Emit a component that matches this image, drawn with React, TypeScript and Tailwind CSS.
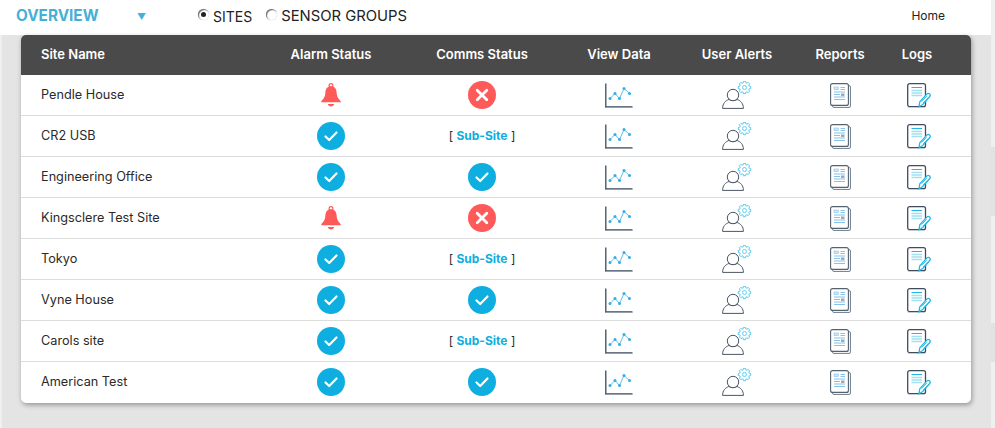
type Site = { name: string; alarm: boolean; comms: "ok" | "bad" | "sub" };

const sites: Site[] = [
    { name: "Pendle House", alarm: true, comms: "bad" },
    { name: "CR2 USB", alarm: false, comms: "sub" },
    { name: "Engineering Office", alarm: false, comms: "ok" },
    { name: "Kingsclere Test Site", alarm: true, comms: "bad" },
    { name: "Tokyo", alarm: false, comms: "sub" },
    { name: "Vyne House", alarm: false, comms: "ok" },
    { name: "Carols site", alarm: false, comms: "sub" },
    { name: "American Test", alarm: false, comms: "ok" },
];

const cols = "grid grid-cols-[234px_152px_150px_124px_112px_94px_60px_24px] items-center";

// 8-tooth cog outline
const gearPath = (cx: number, cy: number, outer: number, inner: number) => {
    const pts: string[] = [];
    for (let i = 0; i < 8; i++) {
        const a = (i * Math.PI) / 4;
        [[-0.27, inner], [-0.17, outer], [0.17, outer], [0.27, inner]].forEach(([d, r]) => {
            pts.push(`${(cx + r * Math.cos(a + d)).toFixed(2)} ${(cy + r * Math.sin(a + d)).toFixed(2)}`);
        });
    }
    return `M${pts.join("L")}Z`;
};

function Bell() {
    return (
        <svg width="22" height="25" viewBox="0 0 22 25">
            <circle cx="11" cy="2.600" r="1.900" fill="none" stroke="#ff5a5a" strokeWidth="1.200" />
            <path d="M11 3.200c-3.600 0-5.400 2.600-5.600 6-.2 3.400-1 6-3.600 8.400-.5.600-.7 1.200-.7 1.700h19.800c0-.5-.2-1.100-.7-1.700-2.600-2.400-3.400-5-3.600-8.400-.2-3.400-2-6-5.600-6z" fill="#ff5a5a" />
            <path d="M7.800 21h6.400c-.3 1.500-1.600 2.400-3.200 2.400S8.100 22.500 7.800 21z" fill="#ff5a5a" />
        </svg>
    );
}

function Check() {
    return (
        <svg width="28" height="28" viewBox="0 0 28 28">
            <circle cx="14" cy="14" r="14" fill="#0eaee0" />
            <path d="M8.500 14.500l3.700 3.500 7.300-7.500" fill="none" stroke="#fff" strokeWidth="2.200" strokeLinecap="round" strokeLinejoin="round" />
        </svg>
    );
}

function Cross() {
    return (
        <svg width="28" height="28" viewBox="0 0 28 28">
            <circle cx="14" cy="14" r="14" fill="#ff5a5a" />
            <path d="M9.200 9.200l9.600 9.600M18.800 9.200l-9.600 9.600" fill="none" stroke="#fff" strokeWidth="2.800" strokeLinecap="round" />
        </svg>
    );
}

function ChartIcon() {
    return (
        <svg width="28" height="25" viewBox="0 0 28 25">
            <path d="M0.800 0.500V24H27.500" fill="none" stroke="#3b4a5c" strokeWidth="1.300" />
            <path d="M0.800 24.900H27.500" stroke="#c5cad0" strokeWidth="0.800" />
            <path d="M5 15.500L10 10.500L14.500 15.500L19 5.500L24.500 10.500" fill="none" stroke="#35aee2" strokeWidth="0.800" />
            <g fill="#35aee2">
                <circle cx="5" cy="15.500" r="1.500" />
                <circle cx="10" cy="10.500" r="1.500" />
                <circle cx="14.500" cy="15.500" r="1.500" />
                <circle cx="19" cy="5.500" r="1.500" />
                <circle cx="24.500" cy="10.500" r="1.500" />
            </g>
        </svg>
    );
}

function UserGear() {
    return (
        <svg width="30" height="28" viewBox="0 0 30 28">
            <path d="M0.600 27.400c0-5 2.800-7.700 6.300-8.900 2.400 1.500 5.800 1.500 8.200 0 3.500 1.200 6.300 3.900 6.300 8.900z" fill="#fff" stroke="#4a5666" strokeWidth="1" />
            <circle cx="11" cy="14" r="5.700" fill="#fff" stroke="#4a5666" strokeWidth="1" />
            <path d={gearPath(22.500, 6.500, 6.300, 4.900)} fill="#fff" stroke="#45c4ec" strokeWidth="0.900" />
            <circle cx="22.500" cy="6.500" r="2" fill="none" stroke="#45c4ec" strokeWidth="0.800" />
        </svg>
    );
}

function ReportIcon() {
    return (
        <svg width="21" height="25" viewBox="0 0 21 25">
            <rect x="2.500" y="2.500" width="18" height="22" rx="1.500" fill="#eef0f2" stroke="#7a8796" strokeWidth="1" />
            <rect x="0.600" y="0.600" width="17.800" height="21.800" rx="2" fill="#fff" stroke="#55636f" strokeWidth="1.100" />
            <rect x="4" y="4" width="4.500" height="2.500" fill="#cfe6f6" stroke="#86c2ea" strokeWidth="0.600" />
            <path d="M10.500 4.500H15M10.500 6.500H15M4 9H15M4 11.500H10M4 14H15M4 16.500H15" stroke="#86c2ea" strokeWidth="1.100" />
            <rect x="11" y="10.500" width="3.500" height="2.400" fill="#9aa6b2" />
        </svg>
    );
}

function LogIcon() {
    return (
        <svg width="24" height="25" viewBox="0 0 24 25">
            <rect x="0.700" y="0.700" width="17.800" height="23" rx="2" fill="#fff" stroke="#3f4d5e" strokeWidth="1.300" />
            <path d="M0.700 24.700H18" stroke="#c0c6cc" strokeWidth="0.800" />
            <path d="M4.500 4.500H15" stroke="#22b8e6" strokeWidth="1.200" />
            <path d="M4.500 7.500H15M4.500 10H15M4.500 12.500H15" stroke="#a5dff2" strokeWidth="1.500" />
            <path d="M12 23.700l.8-5 7-7.600c.9-.9 2-.9 2.800-.1.800.8.800 1.900 0 2.800l-6.900 7.700z" fill="#fff" stroke="#22b8e6" strokeWidth="1.300" />
            <path d="M14.700 18.500l5-5.400M16.300 20l5-5.400" stroke="#22b8e6" strokeWidth="0.900" />
        </svg>
    );
}

export default function App() {
    return (
        <div className="flex h-[428px] w-[995px] overflow-hidden bg-[#e4e4e4] font-['Inter','Liberation_Sans',sans-serif]">
            <div className="w-[991px] shrink-0">
                {/* Top bar */}
                <div className="flex h-[35px] items-center bg-white pb-[3px] pl-[16px]">
                    <span className="w-[121px] text-[15.300px] font-bold text-[#45b0d6]">OVERVIEW</span>
                    <span className="w-[61px] text-[9px] leading-none text-[#45b0d6]">▼</span>
                    <label className="flex items-center text-[14px] text-[#222]">
                        <span className="mr-[4px] mb-[3px] flex h-[11px] w-[11px] items-center justify-center rounded-full bg-white shadow-[inset_1px_1px_1px_rgba(0,0,0,0.6),0_0_1px_rgba(0,0,0,0.3)]">
                            <span className="h-[5px] w-[5px] rounded-full bg-[#222]" />
                        </span>
                        SITES
                    </label>
                    <label className="ml-[14px] flex items-center text-[14.800px] text-[#222]">
                        <span className="mr-[4px] mb-[3px] h-[11px] w-[11px] rounded-full bg-white shadow-[inset_1px_1px_1px_rgba(0,0,0,0.6),0_0_1px_rgba(0,0,0,0.3)]" />
                        SENSOR GROUPS
                    </label>
                    <span className="ml-auto mr-[46px] text-[12px] text-[#222]">Home</span>
                </div>

                {/* Sites table */}
                <div className="h-[393px] border-l-2 border-[#efefef] pl-[19px]">
                    <div className="w-[950px] overflow-hidden rounded-[5px] bg-white shadow-[1px_2px_5px_rgba(0,0,0,0.35)]">
                        <div className={`${cols} h-[40px] bg-[#4a4a4a] text-[13px] font-semibold text-white`}>
                            <div className="pl-[20px]">Site Name</div>
                            <div className="text-center">Alarm Status</div>
                            <div className="text-center">Comms Status</div>
                            <div className="text-center">View Data</div>
                            <div className="text-center">User Alerts</div>
                            <div className="text-center">Reports</div>
                            <div className="text-center">Logs</div>
                            <div />
                        </div>
                        {sites.map((site, i) => (
                            <div key={site.name} className={`${cols} h-[41px] border-b ${i < sites.length - 1 ? "border-[#dcdcdc]" : "border-transparent"} text-[12.700px] text-[#2a2a2a]`}>
                                <div className="pl-[20px]">{site.name}</div>
                                <div className="flex justify-center">{site.alarm ? <Bell /> : <Check />}</div>
                                <div className="flex justify-center">
                                    {site.comms === "ok" && <Check />}
                                    {site.comms === "bad" && <Cross />}
                                    {site.comms === "sub" && (
                                        <span className="text-[12px]">
                                            [ <span className="font-bold text-[#0eaee0]">Sub-Site</span> ]
                                        </span>
                                    )}
                                </div>
                                <div className="flex justify-center"><ChartIcon /></div>
                                <div className="flex justify-center"><UserGear /></div>
                                <div className="flex justify-center"><ReportIcon /></div>
                                <div className="flex justify-center pl-[3px]"><LogIcon /></div>
                                <div />
                            </div>
                        ))}
                    </div>
                </div>
            </div>

            {/* Right edge */}
            <div className="flex w-[4px] flex-col bg-[#efefef]">
                <div className="h-[147px]" />
                <div className="h-[69px] bg-[#e2e2e2]" />
                <div className="h-[107px]" />
                <div className="h-[39px] bg-[#e2e2e2]" />
            </div>
        </div>
    );
}
